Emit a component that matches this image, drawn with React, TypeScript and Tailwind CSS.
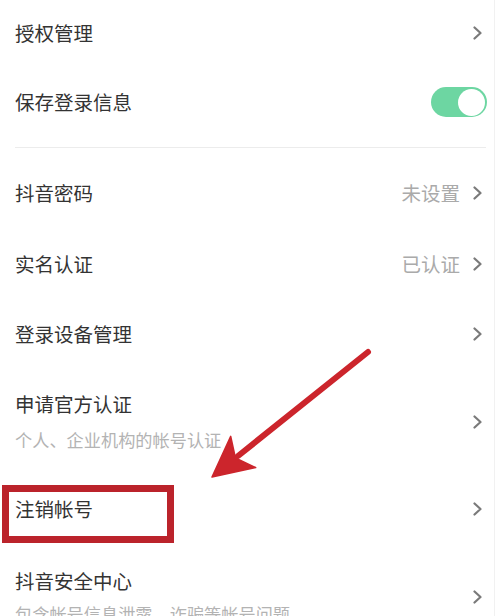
import React from "react";

const Chevron = () => (
  <svg width="11" height="14" viewBox="0 0 11 14" className="shrink-0">
    <polyline points="2.5,1.5 8.5,7 2.5,12.5" fill="none" stroke="#7a7a7a" strokeWidth="2.2" strokeLinecap="round" strokeLinejoin="round" />
  </svg>
);

const Row = ({ title, value, h }: { title: string; value?: string; h: string }) => (
  <div className={`flex items-center justify-between pl-[15px] pr-[11px] ${h}`}>
    <span className="text-[19.5px] leading-[26px] text-[#333333]">{title}</span>
    <div className="flex items-center gap-[12px]">
      {value && <span className="text-[19.5px] leading-[26px] text-[#aaaaaa]">{value}</span>}
      <Chevron />
    </div>
  </div>
);

const TwoLine = ({ title, sub, h, gap }: { title: string; sub: string; h: string; gap: string }) => (
  <div className={`flex items-center justify-between pl-[15px] pr-[11px] ${h}`}>
    <div className={`flex flex-col ${gap}`}>
      <span className="text-[19.5px] leading-[26px] text-[#333333]">{title}</span>
      <span className="text-[17.2px] leading-[24px] text-[#b3b3b3] whitespace-nowrap">{sub}</span>
    </div>
    <Chevron />
  </div>
);

export default function App() {
  return (
    <div
      className="relative w-[500px] h-[616px] overflow-hidden bg-white"
      style={{ fontFamily: '"Noto Sans CJK SC", "Noto Sans", sans-serif' }}
    >
      <div className="w-[495px] h-full border-r border-[#f1f1f1] flex flex-col">
        <Row title="授权管理" h="h-[65px] shrink-0" />
        <div className="flex items-center justify-between pl-[15px] pr-[7px] h-[74px] shrink-0">
          <span className="text-[19.5px] leading-[26px] text-[#333333]">保存登录信息</span>
          <div className="w-[56px] h-[30px] rounded-full bg-[#6dd6a2] flex items-center justify-end pr-[2px]">
            <div className="w-[27px] h-[27px] rounded-full bg-white" />
          </div>
        </div>
        <div className="h-[19px] shrink-0 pt-[8px] pl-[15px] pr-[8px]">
          <div className="h-px bg-[#ececec]" />
        </div>
        <Row title="抖音密码" value="未设置" h="h-[70px] shrink-0" />
        <Row title="实名认证" value="已认证" h="h-[71px] shrink-0" />
        <Row title="登录设备管理" h="h-[70px] shrink-0" />
        <TwoLine title="申请官方认证" sub="个人、企业机构的帐号认证" h="h-[105px] shrink-0" gap="gap-[11px]" />
        <Row title="注销帐号" h="h-[70px] shrink-0" />
        <TwoLine title="抖音安全中心" sub="包含帐号信息泄露、诈骗等帐号问题" h="h-[106px] shrink-0" gap="gap-[8px]" />
      </div>

      <div className="absolute left-[2px] top-[485px] w-[172px] h-[58px] border-[7px] border-[#bb232b]" />

      <svg className="absolute left-0 top-0 pointer-events-none" width="500" height="616" viewBox="0 0 500 616">
        <line x1="368" y1="352" x2="238" y2="456" stroke="#cc252c" strokeWidth="6" strokeLinecap="round" />
        <polygon points="212,477 230.7,436.4 235.4,458 255.7,467.6" fill="#cc252c" stroke="#cc252c" strokeWidth="1.5" strokeLinejoin="round" />
      </svg>
    </div>
  );
}
